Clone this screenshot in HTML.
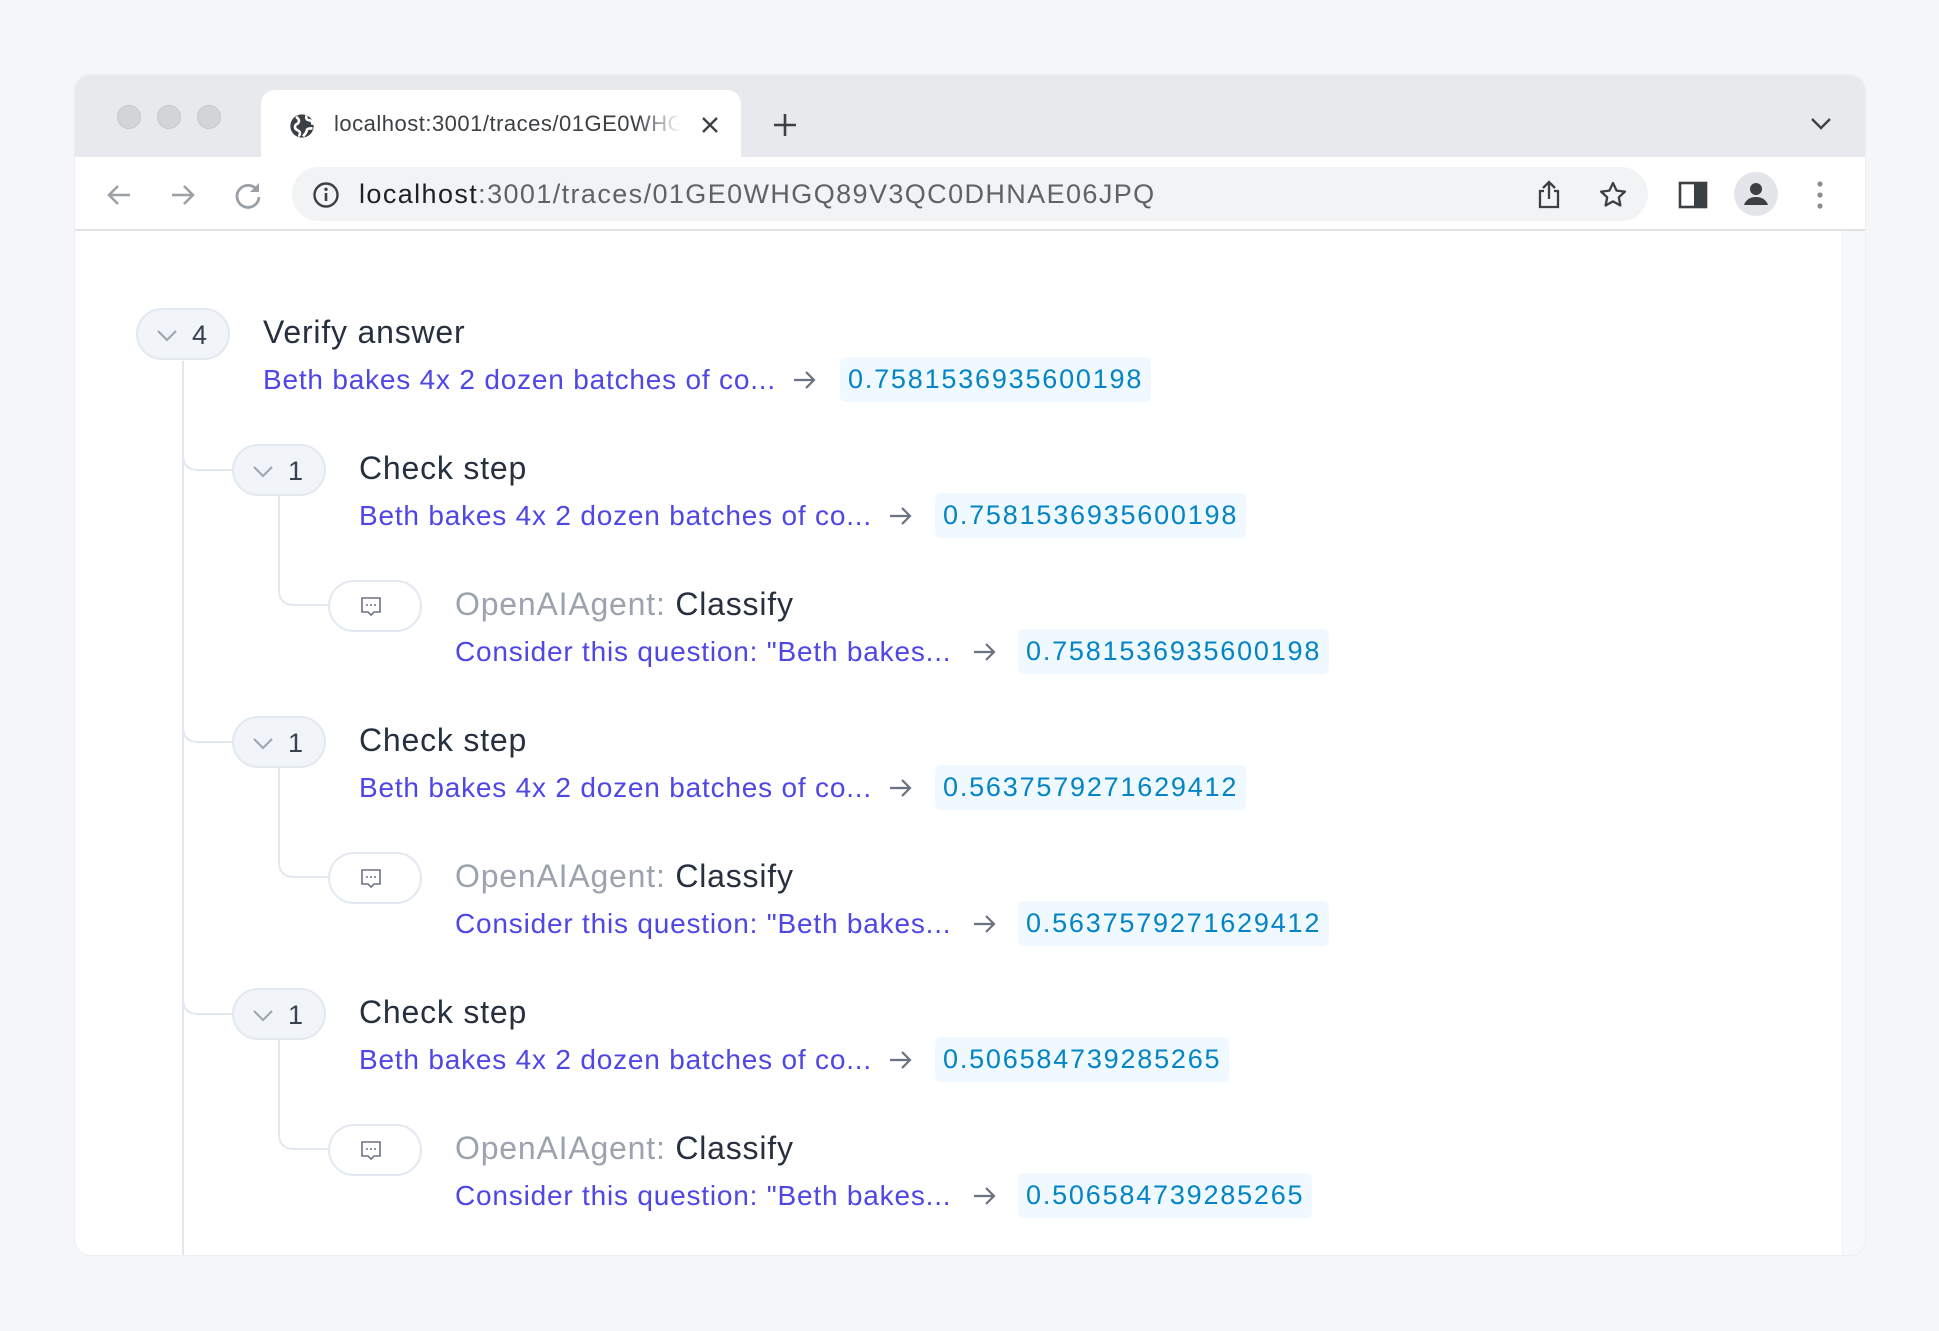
<!DOCTYPE html>
<html><head><meta charset="utf-8"><style>
*{margin:0;padding:0;box-sizing:border-box}
body{width:1939px;height:1331px;background:#f5f6f8;position:relative;overflow:hidden;font-family:"Liberation Sans",Arial,sans-serif}
.win{position:absolute;left:75px;top:75px;width:1790px;height:1180px;border-radius:16px;overflow:hidden;background:#fff;box-shadow:0 0 0 1px #eceef1}
.strip{position:absolute;left:0;top:0;width:100%;height:82px;background:#e8e9ec}
.dot{position:absolute;top:30px;width:24px;height:24px;border-radius:50%;background:#d3d4d7;border:1px solid #c6c7ca}
.tab{position:absolute;left:186px;top:15px;width:480px;height:70px;background:#fff;border-radius:14px 14px 0 0}
.tabtxt{position:absolute;font-size:22px;color:#3c4043;white-space:nowrap;width:346px;overflow:hidden;letter-spacing:0.5px}
.toolbar{position:absolute;left:0;top:82px;width:100%;height:74px;background:#fff;border-bottom:2px solid #e0e1e3}
.omni{position:absolute;left:217px;top:10px;width:1356px;height:54px;border-radius:27px;background:#f1f3f4}
.url{position:absolute;left:67px;top:12px;font-size:27px;color:#202124;letter-spacing:1.4px}
.url span{color:#5f6368}
.a{position:absolute;white-space:nowrap}
.title{font-size:32px;color:#27303f;letter-spacing:0.8px}
.link{font-size:28px;color:#4f46e5;letter-spacing:0.8px}
.badge{font-size:27px;color:#0284c7;background:#f0f9ff;border-radius:6px;padding:7px 8px;letter-spacing:1.8px}
.pill{position:absolute;width:94px;height:52px;border-radius:26px;border:2px solid #e2e8f0;background:#f1f4f8}
.pill.w{background:#fff}
.pill .cv{position:absolute;left:18px;top:12px}
.pill .n{position:absolute;left:54px;top:10px;font-size:27px;color:#374151}
</style></head><body>
<div class="win">
  <div class="strip">
    <div class="dot" style="left:42px"></div><div class="dot" style="left:82px"></div><div class="dot" style="left:122px"></div>
    <div class="tab"></div>
    <svg style="position:absolute;left:213px;top:37px" width="28" height="28" viewBox="0 0 24 24"><circle cx="12" cy="12" r="10" fill="#3c4043"/><path d="M7 4c2 2 3 3 2 5s-3 1-3 4 3 2 4 4-1 3 0 4M16 3c-1 2 0 4 2 4s3 2 3 4M13 21c1-2 3-3 3-5s3-2 5-2" stroke="#fff" stroke-width="2.2" fill="none"/></svg>
    <svg style="position:absolute;left:625px;top:40px" width="20" height="20" viewBox="0 0 20 20"><path d="M3 3l14 14M17 3L3 17" stroke="#3c4043" stroke-width="2.4"/></svg>
    <svg style="position:absolute;left:697px;top:37px" width="26" height="26" viewBox="0 0 26 26"><path d="M13 2v22M2 13h22" stroke="#3c4043" stroke-width="2.6"/></svg>
    <svg style="position:absolute;left:1735px;top:42px" width="22" height="14" viewBox="0 0 22 14"><path d="M2 2l9 9 9-9" stroke="#3c4043" stroke-width="2.4" fill="none"/></svg>
  </div>
  <div class="tabtxt" style="left:259px;top:36px;-webkit-mask-image:linear-gradient(90deg,#000 88%,transparent);">localhost:3001/traces/01GE0WHGQ89V3QC0</div>
  <div class="toolbar">
    <svg style="position:absolute;left:30px;top:24px" width="28" height="28" viewBox="0 0 28 28"><path d="M25 14H4M13 5l-9 9 9 9" stroke="#9aa0a6" stroke-width="2.6" fill="none"/></svg>
    <svg style="position:absolute;left:94px;top:24px" width="28" height="28" viewBox="0 0 28 28"><path d="M3 14h21M15 5l9 9-9 9" stroke="#9aa0a6" stroke-width="2.6" fill="none"/></svg>
    <svg style="position:absolute;left:158px;top:23px" width="30" height="30" viewBox="0 0 30 30"><path d="M24 10A11 11 0 1 0 26 17" stroke="#9aa0a6" stroke-width="2.8" fill="none"/><path d="M26 3v9h-9z" fill="#9aa0a6"/></svg>
    <div class="omni">
      <svg style="position:absolute;left:20px;top:14px" width="28" height="28" viewBox="0 0 28 28"><circle cx="14" cy="14" r="11.5" stroke="#3c4043" stroke-width="2.4" fill="none"/><path d="M14 12v8" stroke="#3c4043" stroke-width="2.6"/><circle cx="14" cy="8.3" r="1.7" fill="#3c4043"/></svg>
      <div class="url">localhost<span>:3001/traces/01GE0WHGQ89V3QC0DHNAE06JPQ</span></div>
      <svg style="position:absolute;left:1243px;top:13px" width="28" height="30" viewBox="0 0 28 30"><path d="M9 11H5v16h18V11h-4M14 19V3M8 8l6-6 6 6" stroke="#3c4043" stroke-width="2.3" fill="none"/></svg>
      <svg style="position:absolute;left:1306px;top:13px" width="30" height="30" viewBox="0 0 30 30"><path d="M15 3l3.6 7.6 8.3 1-6.1 5.7 1.6 8.2L15 21.4l-7.4 4.1 1.6-8.2L3.1 11.6l8.3-1z" stroke="#3c4043" stroke-width="2.3" fill="none" stroke-linejoin="round"/></svg>
    </div>
    <svg style="position:absolute;left:1603px;top:24px" width="30" height="28" viewBox="0 0 30 28"><rect x="2" y="2" width="26" height="24" stroke="#3c4043" stroke-width="2.6" fill="none"/><rect x="16" y="2" width="12" height="24" fill="#3c4043"/></svg>
    <div style="position:absolute;left:1659px;top:15px;width:44px;height:44px;border-radius:50%;background:#e3e5e8"></div>
    <svg style="position:absolute;left:1666px;top:22px" width="30" height="30" viewBox="0 0 30 30"><circle cx="15" cy="10" r="6" fill="#3c4043"/><path d="M3 26c2-6 7-8 12-8s10 2 12 8z" fill="#3c4043"/></svg>
    <svg style="position:absolute;left:1740px;top:22px" width="10" height="32" viewBox="0 0 10 32"><circle cx="5" cy="5" r="2.6" fill="#8a8d91"/><circle cx="5" cy="16" r="2.6" fill="#8a8d91"/><circle cx="5" cy="27" r="2.6" fill="#8a8d91"/></svg>
  </div>
  <div style="position:absolute;left:1767px;top:156px;width:23px;height:1024px;background:#f7f8fa;border-left:1px solid #eef0f2"></div>
</div>

<svg style="position:absolute;left:0;top:0" width="1939" height="1331">
  <g stroke="#e2e8f0" stroke-width="2" fill="none">
    <path d="M183 361V1255"/>
    <path d="M183 455q0 15 15 15h34"/><path d="M183 727q0 15 15 15h34"/><path d="M183 999q0 15 15 15h34"/>
    <path d="M279 496V590q0 15 15 15h34"/><path d="M279 768V862q0 15 15 15h34"/><path d="M279 1040V1134q0 15 15 15h34"/>
  </g>
  <g stroke="#6b7280" stroke-width="2.2" fill="none">
    <path d="M794 380h20M806 372l8 8-8 8"/>
    <path d="M890 516h20M902 508l8 8-8 8"/>
    <path d="M974 652h20M986 644l8 8-8 8"/>
    <path d="M890 788h20M902 780l8 8-8 8"/>
    <path d="M974 924h20M986 916l8 8-8 8"/>
    <path d="M890 1060h20M902 1052l8 8-8 8"/>
    <path d="M974 1196h20M986 1188l8 8-8 8"/>
  </g>
</svg>

<!-- root -->
<div class="pill" style="left:136px;top:308px"><svg class="cv" width="22" height="26" viewBox="0 0 22 26"><path d="M2 9l9 9 9-9" stroke="#9aa3af" stroke-width="2" fill="none"/></svg><div class="n">4</div></div>
<div class="a title" style="left:263px;top:314px">Verify answer</div>
<div class="a link" style="left:263px;top:364px">Beth bakes 4x 2 dozen batches of co...</div>
<div class="a badge" style="left:840px;top:357px">0.7581536935600198</div>

<!-- L1 -->
<div class="pill" style="left:232px;top:444px"><svg class="cv" width="22" height="26" viewBox="0 0 22 26"><path d="M2 9l9 9 9-9" stroke="#9aa3af" stroke-width="2" fill="none"/></svg><div class="n">1</div></div>
<div class="a title" style="left:359px;top:450px">Check step</div>
<div class="a link" style="left:359px;top:500px">Beth bakes 4x 2 dozen batches of co...</div>
<div class="a badge" style="left:935px;top:493px">0.7581536935600198</div>

<div class="pill w" style="left:328px;top:580px"><svg style="position:absolute;left:29px;top:13px" width="24" height="24" viewBox="0 0 24 24"><path d="M3 3h18v14h-6l-3 3-3-3H3z" stroke="#6b7280" stroke-width="1.6" fill="none"/><circle cx="8" cy="10" r="1" fill="#6b7280"/><circle cx="12" cy="10" r="1" fill="#6b7280"/><circle cx="16" cy="10" r="1" fill="#6b7280"/></svg></div>
<div class="a title" style="left:455px;top:586px"><span style="color:#9ca3af">OpenAIAgent:</span> Classify</div>
<div class="a link" style="left:455px;top:636px">Consider this question: "Beth bakes...</div>
<div class="a badge" style="left:1018px;top:629px">0.7581536935600198</div>

<div class="pill" style="left:232px;top:716px"><svg class="cv" width="22" height="26" viewBox="0 0 22 26"><path d="M2 9l9 9 9-9" stroke="#9aa3af" stroke-width="2" fill="none"/></svg><div class="n">1</div></div>
<div class="a title" style="left:359px;top:722px">Check step</div>
<div class="a link" style="left:359px;top:772px">Beth bakes 4x 2 dozen batches of co...</div>
<div class="a badge" style="left:935px;top:765px">0.5637579271629412</div>

<div class="pill w" style="left:328px;top:852px"><svg style="position:absolute;left:29px;top:13px" width="24" height="24" viewBox="0 0 24 24"><path d="M3 3h18v14h-6l-3 3-3-3H3z" stroke="#6b7280" stroke-width="1.6" fill="none"/><circle cx="8" cy="10" r="1" fill="#6b7280"/><circle cx="12" cy="10" r="1" fill="#6b7280"/><circle cx="16" cy="10" r="1" fill="#6b7280"/></svg></div>
<div class="a title" style="left:455px;top:858px"><span style="color:#9ca3af">OpenAIAgent:</span> Classify</div>
<div class="a link" style="left:455px;top:908px">Consider this question: "Beth bakes...</div>
<div class="a badge" style="left:1018px;top:901px">0.5637579271629412</div>

<div class="pill" style="left:232px;top:988px"><svg class="cv" width="22" height="26" viewBox="0 0 22 26"><path d="M2 9l9 9 9-9" stroke="#9aa3af" stroke-width="2" fill="none"/></svg><div class="n">1</div></div>
<div class="a title" style="left:359px;top:994px">Check step</div>
<div class="a link" style="left:359px;top:1044px">Beth bakes 4x 2 dozen batches of co...</div>
<div class="a badge" style="left:935px;top:1037px">0.506584739285265</div>

<div class="pill w" style="left:328px;top:1124px"><svg style="position:absolute;left:29px;top:13px" width="24" height="24" viewBox="0 0 24 24"><path d="M3 3h18v14h-6l-3 3-3-3H3z" stroke="#6b7280" stroke-width="1.6" fill="none"/><circle cx="8" cy="10" r="1" fill="#6b7280"/><circle cx="12" cy="10" r="1" fill="#6b7280"/><circle cx="16" cy="10" r="1" fill="#6b7280"/></svg></div>
<div class="a title" style="left:455px;top:1130px"><span style="color:#9ca3af">OpenAIAgent:</span> Classify</div>
<div class="a link" style="left:455px;top:1180px">Consider this question: "Beth bakes...</div>
<div class="a badge" style="left:1018px;top:1173px">0.506584739285265</div>
</body></html>
